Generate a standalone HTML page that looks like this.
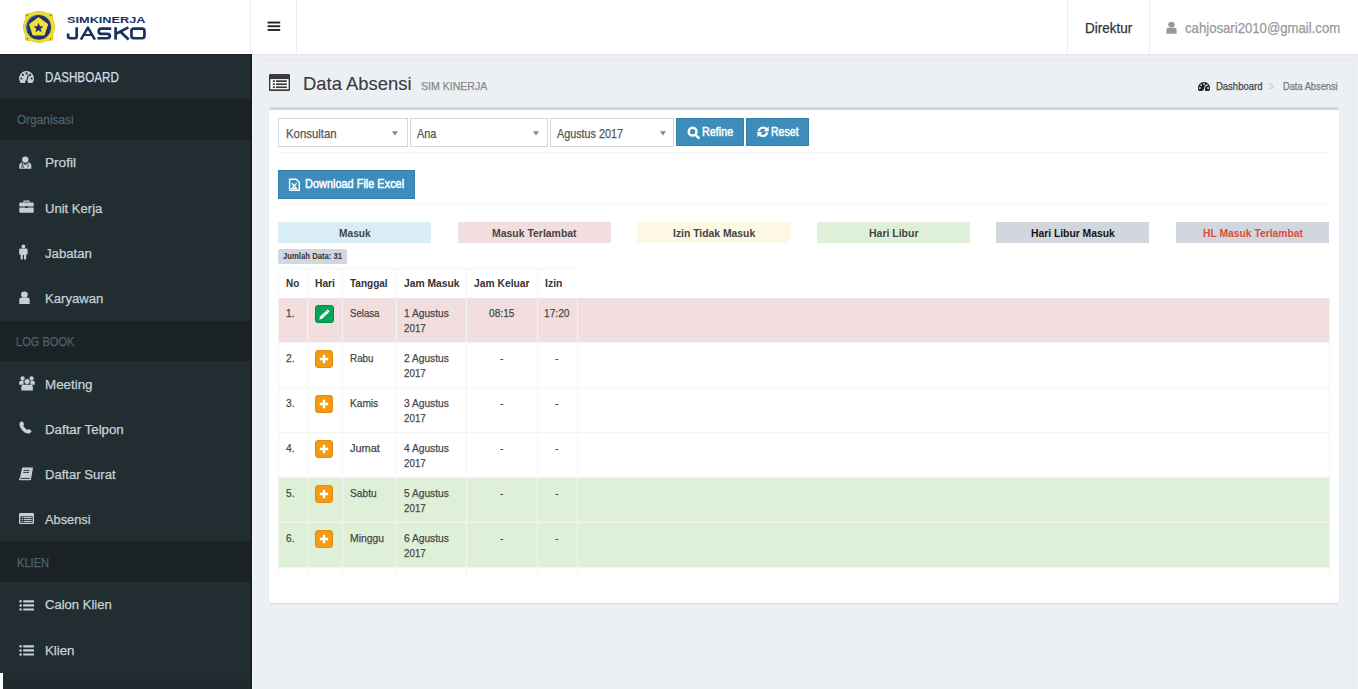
<!DOCTYPE html>
<html><head><meta charset="utf-8"><style>
html,body{margin:0;padding:0;}
body{width:1358px;height:689px;overflow:hidden;position:relative;background:#ecf0f5;font-family:"Liberation Sans",sans-serif;}
.t{position:absolute;white-space:nowrap;transform-origin:0 0;z-index:5;}
svg{position:absolute;overflow:visible;z-index:5;}
</style></head><body>
<div style="position:absolute;left:0px;top:0px;width:1358px;height:54px;background:#fff"></div>
<div style="position:absolute;left:252px;top:54px;width:1106px;height:1px;background:#e1e5ea"></div>
<div style="position:absolute;left:250px;top:0px;width:1px;height:54px;background:#eeeeee"></div>
<div style="position:absolute;left:296px;top:0px;width:1px;height:54px;background:#eeeeee"></div>
<div style="position:absolute;left:1067px;top:0px;width:1px;height:54px;background:#eeeeee"></div>
<div style="position:absolute;left:1149px;top:0px;width:1px;height:54px;background:#eeeeee"></div>
<div style="position:absolute;left:0px;top:55px;width:251px;height:634px;background:#222d32"></div>
<div style="position:absolute;left:250px;top:55px;width:1px;height:634px;background:#1b2327"></div>
<div style="position:absolute;left:251px;top:55px;width:1px;height:634px;background:#10161a"></div>
<div style="position:absolute;left:0px;top:54px;width:252px;height:1px;background:#1a2226"></div>
<div style="position:absolute;left:252px;top:55px;width:1px;height:634px;background:#f7f8fa"></div>
<div style="position:absolute;left:0px;top:99px;width:251px;height:41px;background:#1a2226"></div>
<div style="position:absolute;left:0px;top:321px;width:251px;height:40px;background:#1a2226"></div>
<div style="position:absolute;left:0px;top:541px;width:251px;height:41px;background:#1a2226"></div>
<div style="position:absolute;left:0px;top:673px;width:251px;height:16px;background:#1f292e"></div>
<div style="position:absolute;left:0px;top:673px;width:3px;height:16px;background:#fff"></div>
<div style="position:absolute;left:258px;top:59px;width:1093px;height:1px;background:#e4e8ee"></div>
<div style="position:absolute;left:1353px;top:59px;width:1px;height:630px;background:#e4e8ee"></div>
<div style="position:absolute;left:269px;top:107px;width:1070px;height:496px;background:#fff;border-top:3px solid #d2d6de;border-radius:3px;box-sizing:border-box;box-shadow:0 1px 1px rgba(0,0,0,0.1)"></div>
<div style="position:absolute;left:278px;top:152px;width:1051px;height:1px;background:#f4f4f4"></div>
<div style="position:absolute;left:278px;top:203px;width:1051px;height:1px;background:#f4f4f4"></div>
<div class="t" style="left:1085.00px;top:20.00px;font-size:13.80px;line-height:18px;color:#333;-webkit-text-stroke:0.25px #333;transform:scaleX(0.9766);">Direktur</div>
<div class="t" style="left:1185.20px;top:19.00px;font-size:14.10px;line-height:18px;color:#999;-webkit-text-stroke:0.25px #999;transform:scaleX(0.9335);">cahjosari2010@gmail.com</div>
<div class="t" style="left:303.30px;top:71.00px;font-size:19.05px;line-height:25px;color:#3a3a3a;-webkit-text-stroke:0.1px #3a3a3a;transform:scaleX(0.9684);">Data Absensi</div>
<div class="t" style="left:420.80px;top:78.00px;font-size:11.65px;line-height:15px;color:#888;-webkit-text-stroke:0.25px #888;transform:scaleX(0.9066);">SIM KINERJA</div>
<div class="t" style="left:1216.00px;top:79.00px;font-size:11.20px;line-height:15px;color:#444;-webkit-text-stroke:0.25px #444;transform:scaleX(0.8478);">Dashboard</div>
<svg style="left:1268px;top:83px" width="7" height="7"><path d="M0.8 0.8L5.8 3.5L0.8 6.2" fill="none" stroke="#c4c4c4" stroke-width="1"/></svg>
<div class="t" style="left:1282.60px;top:79.00px;font-size:11.20px;line-height:15px;color:#777;-webkit-text-stroke:0.25px #777;transform:scaleX(0.8291);">Data Absensi</div>
<div class="t" style="left:45.30px;top:68.00px;font-size:13.95px;line-height:18px;color:#cfdde3;-webkit-text-stroke:0.25px #cfdde3;transform:scaleX(0.8360);">DASHBOARD</div>
<div class="t" style="left:16.60px;top:111.00px;font-size:13.10px;line-height:17px;color:#4b646f;-webkit-text-stroke:0.25px #4b646f;transform:scaleX(0.9052);">Organisasi</div>
<div class="t" style="left:45.00px;top:154.00px;font-size:13.25px;line-height:17px;color:#c6d3d9;-webkit-text-stroke:0.25px #c6d3d9;transform:scaleX(1.0280);">Profil</div>
<div class="t" style="left:45.00px;top:200.00px;font-size:13.25px;line-height:17px;color:#c6d3d9;-webkit-text-stroke:0.25px #c6d3d9;transform:scaleX(0.9857);">Unit Kerja</div>
<div class="t" style="left:45.00px;top:245.00px;font-size:13.25px;line-height:17px;color:#c6d3d9;-webkit-text-stroke:0.25px #c6d3d9;transform:scaleX(0.9960);">Jabatan</div>
<div class="t" style="left:45.00px;top:290.00px;font-size:13.25px;line-height:17px;color:#c6d3d9;-webkit-text-stroke:0.25px #c6d3d9;transform:scaleX(0.9899);">Karyawan</div>
<div class="t" style="left:45.00px;top:376.00px;font-size:13.25px;line-height:17px;color:#c6d3d9;-webkit-text-stroke:0.25px #c6d3d9;transform:scaleX(1.0088);">Meeting</div>
<div class="t" style="left:45.00px;top:421.00px;font-size:13.25px;line-height:17px;color:#c6d3d9;-webkit-text-stroke:0.25px #c6d3d9;transform:scaleX(1.0021);">Daftar Telpon</div>
<div class="t" style="left:45.00px;top:466.00px;font-size:13.25px;line-height:17px;color:#c6d3d9;-webkit-text-stroke:0.25px #c6d3d9;transform:scaleX(0.9875);">Daftar Surat</div>
<div class="t" style="left:44.50px;top:511.00px;font-size:13.25px;line-height:17px;color:#c6d3d9;-webkit-text-stroke:0.25px #c6d3d9;transform:scaleX(0.9663);">Absensi</div>
<div class="t" style="left:45.00px;top:596.00px;font-size:13.25px;line-height:17px;color:#c6d3d9;-webkit-text-stroke:0.25px #c6d3d9;transform:scaleX(0.9844);">Calon Klien</div>
<div class="t" style="left:45.00px;top:642.00px;font-size:13.25px;line-height:17px;color:#c6d3d9;-webkit-text-stroke:0.25px #c6d3d9;transform:scaleX(0.9990);">Klien</div>
<div class="t" style="left:16.30px;top:333.00px;font-size:13.35px;line-height:17px;color:#4b646f;-webkit-text-stroke:0.25px #4b646f;transform:scaleX(0.8286);">LOG BOOK</div>
<div class="t" style="left:16.70px;top:554.00px;font-size:13.35px;line-height:17px;color:#4b646f;-webkit-text-stroke:0.25px #4b646f;transform:scaleX(0.8306);">KLIEN</div>
<div class="t" style="left:286.10px;top:125.00px;font-size:13.10px;line-height:17px;color:#555;-webkit-text-stroke:0.25px #555;transform:scaleX(0.8692);">Konsultan</div>
<div class="t" style="left:417.10px;top:125.00px;font-size:13.10px;line-height:17px;color:#555;-webkit-text-stroke:0.25px #555;transform:scaleX(0.8308);">Ana</div>
<div class="t" style="left:557.40px;top:125.00px;font-size:13.10px;line-height:17px;color:#555;-webkit-text-stroke:0.25px #555;transform:scaleX(0.8238);">Agustus 2017</div>
<div class="t" style="left:702.00px;top:125.00px;font-size:11.90px;line-height:15px;color:#fff;-webkit-text-stroke:0.5px #fff;transform:scaleX(0.9058);">Refine</div>
<div class="t" style="left:771.10px;top:125.00px;font-size:11.90px;line-height:15px;color:#fff;-webkit-text-stroke:0.5px #fff;transform:scaleX(0.8872);">Reset</div>
<div class="t" style="left:304.70px;top:176.00px;font-size:12.20px;line-height:16px;color:#fff;-webkit-text-stroke:0.5px #fff;transform:scaleX(0.8977);">Download File Excel</div>
<div style="position:absolute;left:278.1px;top:222px;width:153.3px;height:21.4px;background:#d9edf7"></div>
<div class="t" style="left:338.90px;top:226.00px;font-size:11.20px;line-height:15px;color:#444;font-weight:bold;transform:scaleX(0.9093);">Masuk</div>
<div style="position:absolute;left:457.6px;top:222px;width:153.3px;height:21.4px;background:#f2dede"></div>
<div class="t" style="left:491.90px;top:226.00px;font-size:11.20px;line-height:15px;color:#444;font-weight:bold;transform:scaleX(0.9338);">Masuk Terlambat</div>
<div style="position:absolute;left:637.1px;top:222px;width:153.3px;height:21.4px;background:#fcf8e3"></div>
<div class="t" style="left:673.10px;top:226.00px;font-size:11.20px;line-height:15px;color:#444;font-weight:bold;transform:scaleX(0.9262);">Izin Tidak Masuk</div>
<div style="position:absolute;left:816.6px;top:222px;width:153.3px;height:21.4px;background:#dff0d8"></div>
<div class="t" style="left:868.90px;top:226.00px;font-size:11.20px;line-height:15px;color:#444;font-weight:bold;transform:scaleX(0.9361);">Hari Libur</div>
<div style="position:absolute;left:996.1px;top:222px;width:153.3px;height:21.4px;background:#d2d6de"></div>
<div class="t" style="left:1031.20px;top:226.00px;font-size:11.20px;line-height:15px;color:#111;font-weight:bold;transform:scaleX(0.9227);">Hari Libur Masuk</div>
<div style="position:absolute;left:1175.6px;top:222px;width:153.3px;height:21.4px;background:#d2d6de"></div>
<div class="t" style="left:1202.60px;top:226.00px;font-size:11.20px;line-height:15px;color:#dd4b39;font-weight:bold;transform:scaleX(0.9221);">HL Masuk Terlambat</div>
<div style="position:absolute;left:278px;top:249px;width:69px;height:14.6px;background:#d2d6de;border-radius:2px"></div>
<div class="t" style="left:283.00px;top:250.00px;font-size:9.00px;line-height:12px;color:#333;font-weight:bold;transform:scaleX(0.8565);">Jumlah Data: 31</div>
<div style="position:absolute;left:278px;top:118px;width:130px;height:29px;box-sizing:border-box;border:1px solid #d2d6de;background:#fff"></div>
<svg style="left:392.2px;top:131px" width="6" height="5"><path d="M0 0.3H6L3 4.6Z" fill="#888"/></svg>
<div style="position:absolute;left:410px;top:118px;width:138px;height:29px;box-sizing:border-box;border:1px solid #d2d6de;background:#fff"></div>
<svg style="left:533.0px;top:131px" width="6" height="5"><path d="M0 0.3H6L3 4.6Z" fill="#888"/></svg>
<div style="position:absolute;left:550px;top:118px;width:124px;height:29px;box-sizing:border-box;border:1px solid #d2d6de;background:#fff"></div>
<svg style="left:659.8px;top:131px" width="6" height="5"><path d="M0 0.3H6L3 4.6Z" fill="#888"/></svg>
<div style="position:absolute;left:676px;top:118px;width:68px;height:28px;box-sizing:border-box;background:#3c8dbc;border:1px solid #367fa9"></div>
<div style="position:absolute;left:746px;top:118px;width:63px;height:28px;box-sizing:border-box;background:#3c8dbc;border:1px solid #367fa9"></div>
<div style="position:absolute;left:278px;top:170px;width:137px;height:29px;box-sizing:border-box;background:#3c8dbc;border:1px solid #367fa9"></div>
<svg style="left:686px;top:125px" width="15" height="15"><circle cx="6.6" cy="6.7" r="3.9" fill="none" stroke="#fff" stroke-width="2.5"/><path d="M9.4 9.6L12.6 12.8" stroke="#fff" stroke-width="2.6" stroke-linecap="round"/></svg>
<svg style="left:757px;top:126px" width="13" height="12"><path d="M1.6 5.2A4.6 4.6 0 0 1 9.6 3.3" fill="none" stroke="#fff" stroke-width="2.2"/><path d="M11.7 0.3V5.6H6.6Z" fill="#fff"/><path d="M10.2 6.4A4.6 4.6 0 0 1 2.2 8.3" fill="none" stroke="#fff" stroke-width="2.2"/><path d="M0.3 11.3V6.0H5.4Z" fill="#fff"/></svg>
<svg style="left:288px;top:178px" width="13" height="14"><path d="M1.6 1.2H8.2L11.3 4.3V12.2H1.6Z" fill="none" stroke="#fff" stroke-width="1.4" stroke-linejoin="round"/><path d="M3.8 5.2L8.6 10.6M8.6 5.2L3.8 10.6" stroke="#fff" stroke-width="1.3"/><path d="M3.2 10.6H9.2" stroke="#fff" stroke-width="1.2"/></svg>
<div style="position:absolute;left:278px;top:298px;width:1051px;height:44px;background:#f2dede"></div>
<div style="position:absolute;left:278px;top:342px;width:1051px;height:1px;background:#f4f4f4"></div>
<div style="position:absolute;left:278px;top:387px;width:1051px;height:1px;background:#f4f4f4"></div>
<div style="position:absolute;left:278px;top:432px;width:1051px;height:1px;background:#f4f4f4"></div>
<div style="position:absolute;left:278px;top:477px;width:1051px;height:1px;background:#f4f4f4"></div>
<div style="position:absolute;left:278px;top:478px;width:1051px;height:44px;background:#dff0d8"></div>
<div style="position:absolute;left:278px;top:522px;width:1051px;height:1px;background:#f4f4f4"></div>
<div style="position:absolute;left:278px;top:523px;width:1051px;height:44px;background:#dff0d8"></div>
<div style="position:absolute;left:278px;top:567px;width:1051px;height:1px;background:#f4f4f4"></div>
<div style="position:absolute;left:278px;top:268px;width:300px;height:1px;background:#f4f4f4"></div>
<div style="position:absolute;left:278px;top:268px;width:1px;height:307px;background:#f4f4f4"></div>
<div style="position:absolute;left:307px;top:268px;width:1px;height:307px;background:#f4f4f4"></div>
<div style="position:absolute;left:342px;top:268px;width:1px;height:307px;background:#f4f4f4"></div>
<div style="position:absolute;left:396px;top:268px;width:1px;height:307px;background:#f4f4f4"></div>
<div style="position:absolute;left:466px;top:268px;width:1px;height:307px;background:#f4f4f4"></div>
<div style="position:absolute;left:537px;top:268px;width:1px;height:307px;background:#f4f4f4"></div>
<div style="position:absolute;left:577px;top:298px;width:1px;height:277px;background:#f4f4f4"></div>
<div style="position:absolute;left:1329px;top:298px;width:1px;height:277px;background:#f4f4f4"></div>
<div class="t" style="left:285.60px;top:275.00px;font-size:11.65px;line-height:15px;color:#333;font-weight:bold;transform:scaleX(0.8568);">No</div>
<div class="t" style="left:314.90px;top:275.00px;font-size:11.65px;line-height:15px;color:#333;font-weight:bold;transform:scaleX(0.8799);">Hari</div>
<div class="t" style="left:350.20px;top:275.00px;font-size:11.65px;line-height:15px;color:#333;font-weight:bold;transform:scaleX(0.8600);">Tanggal</div>
<div class="t" style="left:403.50px;top:275.00px;font-size:11.65px;line-height:15px;color:#333;font-weight:bold;transform:scaleX(0.8831);">Jam Masuk</div>
<div class="t" style="left:473.70px;top:275.00px;font-size:11.65px;line-height:15px;color:#333;font-weight:bold;transform:scaleX(0.8855);">Jam Keluar</div>
<div class="t" style="left:544.60px;top:275.00px;font-size:11.65px;line-height:15px;color:#333;font-weight:bold;transform:scaleX(0.8987);">Izin</div>
<div class="t" style="left:285.60px;top:306.00px;font-size:11.50px;line-height:15px;color:#474747;-webkit-text-stroke:0.25px #474747;transform:scaleX(1.0000);transform:scaleX(0.885)">1.</div>
<div class="t" style="left:350.00px;top:306.00px;font-size:11.50px;line-height:15px;color:#474747;-webkit-text-stroke:0.25px #474747;transform:scaleX(0.8383);">Selasa</div>
<div class="t" style="left:403.50px;top:306.00px;font-size:11.50px;line-height:15px;color:#474747;-webkit-text-stroke:0.25px #474747;transform:scaleX(0.8854);">1 Agustus</div>
<div class="t" style="left:403.50px;top:321.00px;font-size:11.50px;line-height:15px;color:#474747;-webkit-text-stroke:0.25px #474747;transform:scaleX(0.8520);">2017</div>
<div class="t" style="left:488.95px;top:306.00px;font-size:11.50px;line-height:15px;color:#474747;-webkit-text-stroke:0.25px #474747;transform:scaleX(0.8854);transform:scaleX(0.885)">08:15</div>
<div class="t" style="left:544.45px;top:306.00px;font-size:11.50px;line-height:15px;color:#474747;-webkit-text-stroke:0.25px #474747;transform:scaleX(0.8854);transform:scaleX(0.885)">17:20</div>
<div style="position:absolute;left:315px;top:305px;width:19px;height:18px;box-sizing:border-box;background:#00a65a;border:1px solid #008d4c;border-radius:3px"></div>
<svg style="left:315px;top:305px" width="19" height="18"><path d="M4.2 14.4L7.04 13.8L14.6 6.8Q14.2 5 12.6 4.6L5.04 11.6Z" fill="#fff"/><path d="M11.6 5.6L13.7 7.6" stroke="#00a65a" stroke-width="0.6"/></svg>
<div class="t" style="left:285.60px;top:351.00px;font-size:11.50px;line-height:15px;color:#474747;-webkit-text-stroke:0.25px #474747;transform:scaleX(1.0000);transform:scaleX(0.885)">2.</div>
<div class="t" style="left:350.00px;top:351.00px;font-size:11.50px;line-height:15px;color:#474747;-webkit-text-stroke:0.25px #474747;transform:scaleX(0.8587);">Rabu</div>
<div class="t" style="left:403.50px;top:351.00px;font-size:11.50px;line-height:15px;color:#474747;-webkit-text-stroke:0.25px #474747;transform:scaleX(0.8854);">2 Agustus</div>
<div class="t" style="left:403.50px;top:366.00px;font-size:11.50px;line-height:15px;color:#474747;-webkit-text-stroke:0.25px #474747;transform:scaleX(0.8520);">2017</div>
<div class="t" style="left:499.99px;top:351.00px;font-size:11.50px;line-height:15px;color:#474747;-webkit-text-stroke:0.25px #474747;transform:scaleX(0.8854);transform:scaleX(0.885)">-</div>
<div class="t" style="left:555.49px;top:351.00px;font-size:11.50px;line-height:15px;color:#474747;-webkit-text-stroke:0.25px #474747;transform:scaleX(0.8854);transform:scaleX(0.885)">-</div>
<div style="position:absolute;left:315px;top:350px;width:18px;height:18px;box-sizing:border-box;background:#f39c12;border:1px solid #e08e0b;border-radius:3px"></div>
<svg style="left:315px;top:350px" width="18" height="18"><path d="M9 4.8V13.2M4.8 9H13.2" stroke="#fff" stroke-width="2.4"/></svg>
<div class="t" style="left:285.60px;top:396.00px;font-size:11.50px;line-height:15px;color:#474747;-webkit-text-stroke:0.25px #474747;transform:scaleX(1.0000);transform:scaleX(0.885)">3.</div>
<div class="t" style="left:350.00px;top:396.00px;font-size:11.50px;line-height:15px;color:#474747;-webkit-text-stroke:0.25px #474747;transform:scaleX(0.8821);">Kamis</div>
<div class="t" style="left:403.50px;top:396.00px;font-size:11.50px;line-height:15px;color:#474747;-webkit-text-stroke:0.25px #474747;transform:scaleX(0.8854);">3 Agustus</div>
<div class="t" style="left:403.50px;top:411.00px;font-size:11.50px;line-height:15px;color:#474747;-webkit-text-stroke:0.25px #474747;transform:scaleX(0.8520);">2017</div>
<div class="t" style="left:499.99px;top:396.00px;font-size:11.50px;line-height:15px;color:#474747;-webkit-text-stroke:0.25px #474747;transform:scaleX(0.8854);transform:scaleX(0.885)">-</div>
<div class="t" style="left:555.49px;top:396.00px;font-size:11.50px;line-height:15px;color:#474747;-webkit-text-stroke:0.25px #474747;transform:scaleX(0.8854);transform:scaleX(0.885)">-</div>
<div style="position:absolute;left:315px;top:395px;width:18px;height:18px;box-sizing:border-box;background:#f39c12;border:1px solid #e08e0b;border-radius:3px"></div>
<svg style="left:315px;top:395px" width="18" height="18"><path d="M9 4.8V13.2M4.8 9H13.2" stroke="#fff" stroke-width="2.4"/></svg>
<div class="t" style="left:285.60px;top:441.00px;font-size:11.50px;line-height:15px;color:#474747;-webkit-text-stroke:0.25px #474747;transform:scaleX(1.0000);transform:scaleX(0.885)">4.</div>
<div class="t" style="left:350.00px;top:441.00px;font-size:11.50px;line-height:15px;color:#474747;-webkit-text-stroke:0.25px #474747;transform:scaleX(0.9541);">Jumat</div>
<div class="t" style="left:403.50px;top:441.00px;font-size:11.50px;line-height:15px;color:#474747;-webkit-text-stroke:0.25px #474747;transform:scaleX(0.8854);">4 Agustus</div>
<div class="t" style="left:403.50px;top:456.00px;font-size:11.50px;line-height:15px;color:#474747;-webkit-text-stroke:0.25px #474747;transform:scaleX(0.8520);">2017</div>
<div class="t" style="left:499.99px;top:441.00px;font-size:11.50px;line-height:15px;color:#474747;-webkit-text-stroke:0.25px #474747;transform:scaleX(0.8854);transform:scaleX(0.885)">-</div>
<div class="t" style="left:555.49px;top:441.00px;font-size:11.50px;line-height:15px;color:#474747;-webkit-text-stroke:0.25px #474747;transform:scaleX(0.8854);transform:scaleX(0.885)">-</div>
<div style="position:absolute;left:315px;top:440px;width:18px;height:18px;box-sizing:border-box;background:#f39c12;border:1px solid #e08e0b;border-radius:3px"></div>
<svg style="left:315px;top:440px" width="18" height="18"><path d="M9 4.8V13.2M4.8 9H13.2" stroke="#fff" stroke-width="2.4"/></svg>
<div class="t" style="left:285.60px;top:486.00px;font-size:11.50px;line-height:15px;color:#474747;-webkit-text-stroke:0.25px #474747;transform:scaleX(1.0000);transform:scaleX(0.885)">5.</div>
<div class="t" style="left:350.00px;top:486.00px;font-size:11.50px;line-height:15px;color:#474747;-webkit-text-stroke:0.25px #474747;transform:scaleX(0.8879);">Sabtu</div>
<div class="t" style="left:403.50px;top:486.00px;font-size:11.50px;line-height:15px;color:#474747;-webkit-text-stroke:0.25px #474747;transform:scaleX(0.8854);">5 Agustus</div>
<div class="t" style="left:403.50px;top:501.00px;font-size:11.50px;line-height:15px;color:#474747;-webkit-text-stroke:0.25px #474747;transform:scaleX(0.8520);">2017</div>
<div class="t" style="left:499.99px;top:486.00px;font-size:11.50px;line-height:15px;color:#474747;-webkit-text-stroke:0.25px #474747;transform:scaleX(0.8854);transform:scaleX(0.885)">-</div>
<div class="t" style="left:555.49px;top:486.00px;font-size:11.50px;line-height:15px;color:#474747;-webkit-text-stroke:0.25px #474747;transform:scaleX(0.8854);transform:scaleX(0.885)">-</div>
<div style="position:absolute;left:315px;top:485px;width:18px;height:18px;box-sizing:border-box;background:#f39c12;border:1px solid #e08e0b;border-radius:3px"></div>
<svg style="left:315px;top:485px" width="18" height="18"><path d="M9 4.8V13.2M4.8 9H13.2" stroke="#fff" stroke-width="2.4"/></svg>
<div class="t" style="left:285.60px;top:531.00px;font-size:11.50px;line-height:15px;color:#474747;-webkit-text-stroke:0.25px #474747;transform:scaleX(1.0000);transform:scaleX(0.885)">6.</div>
<div class="t" style="left:350.00px;top:531.00px;font-size:11.50px;line-height:15px;color:#474747;-webkit-text-stroke:0.25px #474747;transform:scaleX(0.9040);">Minggu</div>
<div class="t" style="left:403.50px;top:531.00px;font-size:11.50px;line-height:15px;color:#474747;-webkit-text-stroke:0.25px #474747;transform:scaleX(0.8854);">6 Agustus</div>
<div class="t" style="left:403.50px;top:546.00px;font-size:11.50px;line-height:15px;color:#474747;-webkit-text-stroke:0.25px #474747;transform:scaleX(0.8520);">2017</div>
<div class="t" style="left:499.99px;top:531.00px;font-size:11.50px;line-height:15px;color:#474747;-webkit-text-stroke:0.25px #474747;transform:scaleX(0.8854);transform:scaleX(0.885)">-</div>
<div class="t" style="left:555.49px;top:531.00px;font-size:11.50px;line-height:15px;color:#474747;-webkit-text-stroke:0.25px #474747;transform:scaleX(0.8854);transform:scaleX(0.885)">-</div>
<div style="position:absolute;left:315px;top:530px;width:18px;height:18px;box-sizing:border-box;background:#f39c12;border:1px solid #e08e0b;border-radius:3px"></div>
<svg style="left:315px;top:530px" width="18" height="18"><path d="M9 4.8V13.2M4.8 9H13.2" stroke="#fff" stroke-width="2.4"/></svg>
<svg style="left:267px;top:21px" width="14" height="10" viewBox="0 0 14 10"><rect x="0.6" y="0.6" width="12.6" height="1.9" fill="#222"/><rect x="0.6" y="4.3" width="12.6" height="1.9" fill="#222"/><rect x="0.6" y="8" width="12.6" height="1.9" fill="#222"/></svg>
<svg style="left:1166px;top:21px" width="11" height="13" viewBox="0 0 11 13"><ellipse cx="5.5" cy="3.6" rx="3.3" ry="2.9" fill="#999"/><path d="M0.4 8.4Q0.4 6.7 2.4 6.7H8.6Q10.6 6.7 10.6 8.4V12.8H0.4Z" fill="#999"/></svg>
<svg style="left:19px;top:71px" width="15" height="12" viewBox="0 0 15 12"><path d="M1.50 12.00A7.50 7.50 0 1 1 13.50 12.00Z" fill="#c3d0d6"/><circle cx="2.40" cy="7.50" r="1.12" fill="#222d32"/><circle cx="3.89" cy="3.89" r="1.12" fill="#222d32"/><circle cx="7.50" cy="2.40" r="1.12" fill="#222d32"/><circle cx="11.11" cy="3.89" r="1.12" fill="#222d32"/><circle cx="12.60" cy="7.50" r="1.12" fill="#222d32"/><path d="M7.50 10.88L9.38 3.75" stroke="#222d32" stroke-width="1.20"/><circle cx="7.50" cy="10.88" r="1.50" fill="#222d32"/></svg>
<svg style="left:19px;top:156px" width="13" height="13" viewBox="0 0 13 13"><circle cx="6.3" cy="3.6" r="3.2" fill="#c3d0d6"/><path d="M0.3 12.8V10Q0.3 6.9 3.2 6.6L6.3 9L9.4 6.6Q12.3 6.9 12.3 10V12.8Z" fill="#c3d0d6"/><circle cx="3.6" cy="10.6" r="1.1" fill="none" stroke="#222d32" stroke-width="0.8"/><path d="M3.3 7V9.5M9 7.5V11.5" stroke="#222d32" stroke-width="0.8"/></svg>
<svg style="left:19px;top:200px" width="15" height="13" viewBox="0 0 15 13"><path d="M4.3 2.6V1.2Q4.3 0.6 4.9 0.6H10.1Q10.7 0.6 10.7 1.2V2.6H9.5V1.7H5.5V2.6Z" fill="#c3d0d6"/><rect x="0.3" y="2.6" width="14.4" height="3.9" rx="0.8" fill="#c3d0d6"/><rect x="0.3" y="7.6" width="14.4" height="5.2" rx="0.8" fill="#c3d0d6"/><rect x="6.3" y="6.2" width="2.4" height="1.8" fill="#222d32"/></svg>
<svg style="left:19px;top:244px" width="9" height="16" viewBox="0 0 9 16"><circle cx="4.4" cy="2.4" r="1.9" fill="#c3d0d6"/><path d="M1.6 4.6H7.2Q8.6 4.6 8.6 6V10.4H7.2V15.4H5V11H3.8V15.4H1.6V10.4H0.2V6Q0.2 4.6 1.6 4.6Z" fill="#c3d0d6"/></svg>
<svg style="left:19px;top:291px" width="11" height="14" viewBox="0 0 11 14"><ellipse cx="5.4" cy="3.5" rx="3.4" ry="3.1" fill="#c3d0d6"/><path d="M0.3 9Q0.3 6.6 2.6 6.6H8.2Q10.7 6.6 10.7 9V13H0.3Z" fill="#c3d0d6"/></svg>
<svg style="left:19px;top:376px" width="16" height="15" viewBox="0 0 16 15"><circle cx="3.6" cy="2.4" r="2.1" fill="#c3d0d6"/><circle cx="12.6" cy="2.4" r="2.1" fill="#c3d0d6"/><path d="M0.2 8.8V6.4Q0.2 4.8 1.8 4.8H4.8L4.4 8.8Z" fill="#c3d0d6"/><path d="M15.8 8.8V6.4Q15.8 4.8 14.2 4.8H11.2L11.6 8.8Z" fill="#c3d0d6"/><circle cx="8.1" cy="5.6" r="2.9" fill="#c3d0d6" stroke="#222d32" stroke-width="0.6"/><path d="M2.3 14.6V11Q2.3 8.8 4.5 8.8H11.7Q13.9 8.8 13.9 11V14.6Z" fill="#c3d0d6"/></svg>
<svg style="left:19px;top:421px" width="13" height="13" viewBox="0 0 13 13"><path d="M2.2 0.6Q0.2 1.2 0.4 3.6Q1.2 8.4 5.6 11.6Q8.6 13 10.8 12.2L12.4 10.8Q12.8 10 12 9.4L10.2 8.2Q9.6 7.8 9 8.4L8.4 9Q5.4 7.4 4.2 4.6L4.8 4Q5.4 3.4 5 2.8L3.8 0.8Q3.2 0.2 2.2 0.6Z" fill="#c3d0d6"/></svg>
<svg style="left:19px;top:467px" width="14" height="14" viewBox="0 0 14 14"><path d="M3.2 0.6H13.4L11 11.6H0.8Z" fill="#c3d0d6"/><path d="M11.6 12.6H1.4Q0.4 12.6 0.6 11.2" fill="none" stroke="#c3d0d6" stroke-width="1.3"/><path d="M13.4 0.6L11.4 12.6" stroke="#c3d0d6" stroke-width="1.2"/><path d="M4.6 3.4H10.4M4.2 5.4H10" stroke="#222d32" stroke-width="0.9"/><path d="M1.8 11.4H10.6" stroke="#222d32" stroke-width="0.8"/></svg>
<svg style="left:19px;top:513px" width="15" height="11" viewBox="0 0 15 11"><rect x="0" y="0" width="15" height="11" rx="1.2" fill="#c3d0d6"/><rect x="1.4" y="3.30" width="12.2" height="6.60" fill="#222d32"/><rect x="2.70" y="4.07" width="1.50" height="1.10" fill="#c3d0d6"/><rect x="4.95" y="4.07" width="7.80" height="1.10" fill="#c3d0d6"/><rect x="2.70" y="6.05" width="1.50" height="1.10" fill="#c3d0d6"/><rect x="4.95" y="6.05" width="7.80" height="1.10" fill="#c3d0d6"/><rect x="2.70" y="8.03" width="1.50" height="1.10" fill="#c3d0d6"/><rect x="4.95" y="8.03" width="7.80" height="1.10" fill="#c3d0d6"/></svg>
<svg style="left:19px;top:600.4px" width="15" height="11" viewBox="0 0 15 11"><circle cx="1.6" cy="1.3" r="1.25" fill="#c3d0d6"/><rect x="4.2" y="0.2" width="10.8" height="2.2" rx="0.3" fill="#c3d0d6"/><circle cx="1.6" cy="5.4" r="1.25" fill="#c3d0d6"/><rect x="4.2" y="4.3" width="10.8" height="2.2" rx="0.3" fill="#c3d0d6"/><circle cx="1.6" cy="9.5" r="1.25" fill="#c3d0d6"/><rect x="4.2" y="8.4" width="10.8" height="2.2" rx="0.3" fill="#c3d0d6"/></svg>
<svg style="left:19px;top:645.4px" width="15" height="11" viewBox="0 0 15 11"><circle cx="1.6" cy="1.3" r="1.25" fill="#c3d0d6"/><rect x="4.2" y="0.2" width="10.8" height="2.2" rx="0.3" fill="#c3d0d6"/><circle cx="1.6" cy="5.4" r="1.25" fill="#c3d0d6"/><rect x="4.2" y="4.3" width="10.8" height="2.2" rx="0.3" fill="#c3d0d6"/><circle cx="1.6" cy="9.5" r="1.25" fill="#c3d0d6"/><rect x="4.2" y="8.4" width="10.8" height="2.2" rx="0.3" fill="#c3d0d6"/></svg>
<svg style="left:269px;top:74px" width="21" height="17" viewBox="0 0 21 17"><rect x="0" y="0" width="21" height="17" rx="1.2" fill="#3a3a3a"/><rect x="1.4" y="5.10" width="18.2" height="10.20" fill="#ffffff"/><rect x="3.78" y="6.29" width="2.10" height="1.70" fill="#3a3a3a"/><rect x="6.93" y="6.29" width="10.92" height="1.70" fill="#3a3a3a"/><rect x="3.78" y="9.35" width="2.10" height="1.70" fill="#3a3a3a"/><rect x="6.93" y="9.35" width="10.92" height="1.70" fill="#3a3a3a"/><rect x="3.78" y="12.41" width="2.10" height="1.70" fill="#3a3a3a"/><rect x="6.93" y="12.41" width="10.92" height="1.70" fill="#3a3a3a"/></svg>
<svg style="left:1198px;top:82px" width="12" height="9" viewBox="0 0 12 9"><path d="M0.80 9.00A6.00 6.00 0 1 1 11.20 9.00Z" fill="#222"/><circle cx="1.92" cy="6.00" r="0.90" fill="#ecf0f5"/><circle cx="3.12" cy="3.12" r="0.90" fill="#ecf0f5"/><circle cx="6.00" cy="1.92" r="0.90" fill="#ecf0f5"/><circle cx="8.88" cy="3.12" r="0.90" fill="#ecf0f5"/><circle cx="10.08" cy="6.00" r="0.90" fill="#ecf0f5"/><path d="M6.00 8.70L7.50 3.00" stroke="#ecf0f5" stroke-width="0.96"/><circle cx="6.00" cy="8.70" r="1.20" fill="#ecf0f5"/></svg>
<svg style="left:22.5px;top:11.2px" width="32" height="32" viewBox="0 0 32 32"><circle cx="16" cy="16" r="15.9" fill="#d9c31c"/><rect x="2" y="2.2" width="28" height="27.8" rx="2.2" fill="#d9c31c"/><circle cx="16" cy="16" r="15.3" fill="#f2dd2e"/><rect x="2.6" y="2.8" width="26.8" height="26.6" rx="1.8" fill="#f2dd2e"/><circle cx="15.7" cy="16.3" r="12.9" fill="#1d3563" stroke="#f9ec74" stroke-width="0.7"/><path d="M4.6 21A12 12 0 0 1 12.5 4.6" fill="none" stroke="#5a7aa0" stroke-width="2" opacity="0.5"/><path d="M15.60 7.30 L24.06 13.45 L20.83 23.40 L10.37 23.40 L7.14 13.45Z" fill="#f5e03a" stroke="#f5e03a" stroke-width="2" stroke-linejoin="round"/><path d="M15.50 11.80 L16.85 15.14 L20.45 15.39 L17.69 17.71 L18.56 21.21 L15.50 19.30 L12.44 21.21 L13.31 17.71 L10.55 15.39 L14.15 15.14Z" fill="#1d3563"/><circle cx="4.3" cy="4.4" r="0.75" fill="#5e5410"/><circle cx="27.5" cy="4.4" r="0.75" fill="#5e5410"/><circle cx="4.3" cy="27.8" r="0.75" fill="#5e5410"/><circle cx="27.5" cy="27.8" r="0.75" fill="#5e5410"/></svg>
<svg style="left:0;top:0" width="160" height="50"><path d="M76.7 27.2V36.4Q76.7 38.25 73.5 38.25H70.6Q68.1 38.25 68.1 36.6V33.6" fill="none" stroke="#173260" stroke-width="2.7"/><path d="M80.9 39.6L87.9 27.599999999999998L94.9 39.6" fill="none" stroke="#173260" stroke-width="2.6" stroke-linejoin="round"/><path d="M84.0 35H91.8" stroke="#173260" stroke-width="2"/><path d="M111.2 28.55H101.35Q98.75 28.55 98.75 30.95V31.4Q98.75 33.8 101.15 33.8H107.45Q109.85000000000001 33.8 109.85000000000001 36.2V35.85Q109.85000000000001 38.25 107.25000000000001 38.25H97.4" fill="none" stroke="#173260" stroke-width="2.7"/><path d="M115.6 27.2V39.6" stroke="#173260" stroke-width="2.7"/><path d="M128.4 27.4L116.6 33.5" fill="none" stroke="#173260" stroke-width="2.7"/><path d="M120.2 31.6L128.6 39.5" stroke="#173260" stroke-width="2.8"/><rect x="131.45" y="28.55" width="13.000000000000018" height="9.700000000000003" rx="2.4" fill="none" stroke="#173260" stroke-width="2.7"/></svg>
<div class="t" style="left:66.60px;top:14.00px;font-size:9.30px;line-height:12px;color:#173260;font-weight:bold;transform:scaleX(1.3694);">SIMKINERJA</div>
</body></html>
